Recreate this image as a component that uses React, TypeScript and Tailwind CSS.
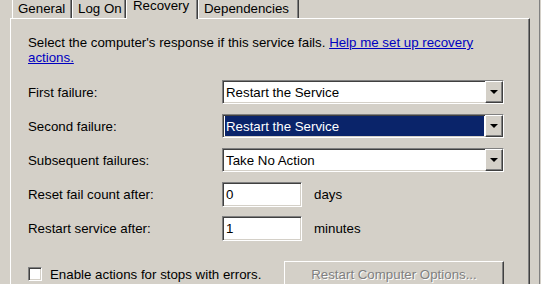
import { ReactNode } from "react";

const sunken =
  "border border-t-[#808080] border-l-[#808080] border-b-white border-r-white shadow-[inset_1px_1px_0_#404040,inset_-1px_-1px_0_#d4d0c8]";

function Tab({ label, width, selected }: { label: string; width: string; selected?: boolean }) {
  if (selected) {
    return (
      <div
        className={`relative z-10 -mb-px flex h-[26px] items-end border-l border-r border-l-white border-r-[#404040] bg-[#d4d0c8] pb-[6px] pl-[6px] shadow-[inset_-1px_0_#808080] ${width}`}
      >
        {label}
      </div>
    );
  }
  return (
    <div
      className={`flex h-[22px] items-end border-l border-r border-l-white border-r-[#404040] pb-[2px] pl-[5px] shadow-[inset_-1px_0_#808080] ${width}`}
    >
      {label}
    </div>
  );
}

function Combo({ value, focused }: { value: string; focused?: boolean }) {
  return (
    <div className={`flex h-[24px] w-[282px] bg-white ${sunken}`}>
      <div className="flex flex-1 p-px pl-[2px]">
        <div
          className={`flex flex-1 items-center pl-[1px] ${
            focused ? "bg-[#0a246a] text-white" : "text-black"
          }`}
        >
          {value}
        </div>
      </div>
      <div className="flex w-[18px] items-center justify-center border border-t-white border-l-white border-b-[#404040] border-r-[#404040] bg-[#d4d0c8] shadow-[inset_-1px_-1px_0_#808080]">
        <svg width="8" height="4" viewBox="0 0 8 4">
          <path d="M0 0h8L4 4z" fill="#000" />
        </svg>
      </div>
    </div>
  );
}

function Row({ label, children }: { label: string; children: ReactNode }) {
  return (
    <div className="flex items-center">
      <div className="w-[194px]">{label}</div>
      {children}
    </div>
  );
}

function NumberField({ value, unit }: { value: string; unit: string }) {
  return (
    <>
      <div className={`flex h-[25px] w-[80px] items-center bg-white pl-[3px] ${sunken}`}>{value}</div>
      <span className="ml-[12px]">{unit}</span>
    </>
  );
}

export default function App() {
  return (
    <div className="flex h-[284px] w-[541px] overflow-hidden bg-[#d4d0c8] font-['Liberation_Sans',Arial,sans-serif] text-[13.3px] leading-[15px] text-black">
      <div className="flex flex-1 flex-col pl-[10px]">
        <div className="flex h-[18px] shrink-0 items-end pl-[2px]">
          <Tab label="General" width="w-[60px]" />
          <Tab label="Log On" width="w-[54px]" />
          <Tab label="Recovery" width="w-[72px]" selected />
          <Tab label="Dependencies" width="w-[101px]" />
        </div>

        <div className="h-[300px] w-[520px] shrink-0 border-l border-r border-t border-l-white border-r-[#404040] border-t-white pl-[17px] pt-[16px] shadow-[inset_-1px_0_#808080]">
          <p className="w-[475px]">
            Select the computer's response if this service fails.{" "}
            <span className="text-[#0000c0] underline">Help me set up recovery actions.</span>
          </p>

          <div className="mt-[15px] flex flex-col gap-[10px]">
            <Row label="First failure:">
              <Combo value="Restart the Service" />
            </Row>
            <Row label="Second failure:">
              <Combo value="Restart the Service" focused />
            </Row>
            <Row label="Subsequent failures:">
              <Combo value="Take No Action" />
            </Row>
          </div>

          <div className="mt-[10px] flex flex-col gap-[9px]">
            <Row label="Reset fail count after:">
              <NumberField value="0" unit="days" />
            </Row>
            <Row label="Restart service after:">
              <NumberField value="1" unit="minutes" />
            </Row>
          </div>

          <div className="mt-[20px] flex items-center">
            <div className="flex w-[256px] items-center">
              <div className={`h-[14px] w-[14px] bg-white ${sunken}`} />
              <span className="ml-[8px]">Enable actions for stops with errors.</span>
            </div>
            <div className="flex h-[26px] w-[220px] items-center justify-center border border-t-white border-l-white border-b-[#404040] border-r-[#404040] text-[#808080] shadow-[inset_-1px_-1px_0_#808080] [text-shadow:1px_1px_0_#fff]">
              Restart Computer Options...
            </div>
          </div>
        </div>
      </div>
      <div className="w-px bg-[#808080]" />
      <div className="w-px" />
    </div>
  );
}
